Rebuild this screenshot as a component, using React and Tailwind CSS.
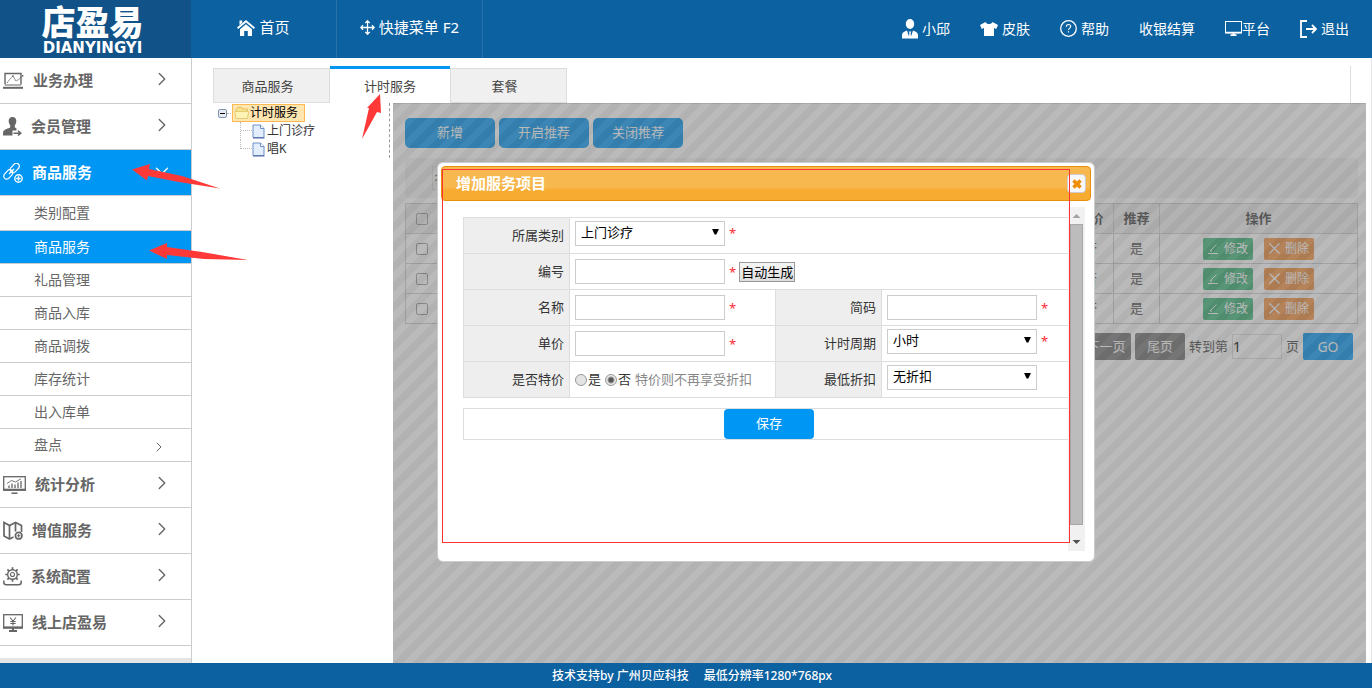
import React, { useState } from "react";
import clsx from "clsx";
import { ChevronRight, ChevronDown, X } from "lucide-react";

// sidebar icons
const LaptopIcon = () => (
  <svg width="21" height="17" viewBox="0 0 21 17" fill="none" stroke="currentColor">
    <path d="M2 12.5V1.5h16v11" strokeWidth="1.4" />
    <path d="M2 13h16" strokeWidth="1" />
    <path d="M0 15.8h20" strokeWidth="2" />
    <path d="M4 11l3-4 3-3 3 5 3.5-2 3-3.5" strokeWidth="0.9" strokeDasharray="2 0.6" />
    <path d="M9.3 3.3h1.4v1.4H9.3zM19 3h1.4v1.4H19z" fill="currentColor" stroke="none" />
  </svg>
);

const MemberIcon = () => (
  <svg width="19" height="19" viewBox="0 0 19 19" fill="currentColor">
    <path d="M9.5 0C7 0 5.500 1.700 5.700 4.200c.1 1.700.7 3 1.500 3.900v2.200C6.500 11.700 0 11.800 0 16v2.500h9.500v-5h4v-2c-1-.4-1.500-.8-1.700-1.200V8.100c.9-.9 1.400-2.200 1.500-3.900C13.500 1.700 12 0 9.500 0z" />
    <path d="M10.500 16.200h7M15 13.700l2.800 2.500-2.800 2.300" fill="none" stroke="currentColor" strokeWidth="1.500" />
  </svg>
);

const LinkIcon = () => (
  <svg width="20" height="20" viewBox="0 0 20 20" fill="none" stroke="currentColor" strokeWidth="1.200">
    <rect x="6.500" y="2" width="10.500" height="6" rx="3" transform="rotate(-48 11.700 5)" />
    <rect x="0" y="8.500" width="10.500" height="6" rx="3" transform="rotate(-48 5.200 11.500)" />
    <path d="M6 11l5-5" />
    <circle cx="15.500" cy="15.500" r="3.700" strokeWidth="1.400" />
    <path d="M15.500 13.300v4.400M13.300 15.500h4.400" strokeWidth="1.400" />
  </svg>
);

const StatsIcon = () => (
  <svg width="23" height="18" viewBox="0 0 23 18" fill="none" stroke="currentColor">
    <rect x="0.700" y="0.700" width="21.600" height="13" strokeWidth="1.300" />
    <path d="M0 13.800h23" strokeWidth="2.200" />
    <path d="M8.500 17.200h6" strokeWidth="1.500" />
    <path d="M6 12V9.500M9 12V7.500M12 12V8.500M15 12V6.500M18 12V5" strokeWidth="1.300" />
    <path d="M4 7.500l4.500-3 4 1.500L18 2.800" strokeWidth="0.900" />
  </svg>
);

const MapIcon = () => (
  <svg width="20" height="19" viewBox="0 0 20 19" fill="none" stroke="currentColor" strokeWidth="1.700">
    <path d="M10.500 16L6.500 18l-5.500-3V1.500l5.500 3 6-3 6 3v6.500" />
    <path d="M6.500 4.500V18M12.500 1.500v9" />
    <circle cx="15.700" cy="14.700" r="3.300" />
    <path d="M15.700 13v3.400M14 14.700h3.400" strokeWidth="1.100" />
  </svg>
);

const GearIcon = () => (
  <svg width="19" height="19" viewBox="0 0 19 19" fill="none" stroke="currentColor">
    <circle cx="9.500" cy="7.500" r="4.800" strokeWidth="1.400" />
    <circle cx="9.500" cy="7.500" r="2" strokeWidth="1.100" />
    <path d="M9.500 0.300v2.400M9.500 12.300v2.400M2.300 7.500h2.400M14.300 7.500h2.400M4.400 2.400l1.700 1.700M12.900 10.900l1.700 1.700M4.400 12.600l1.700-1.700M12.900 4.100l1.700-1.700" strokeWidth="1.700" />
    <path d="M0.800 13.500v1.700c0 1.500 1 2.500 2.500 2.500h12.400c1.500 0 2.500-1 2.500-2.500v-1.700" strokeWidth="1.500" />
  </svg>
);

const OnlineIcon = () => (
  <svg width="20" height="18" viewBox="0 0 20 18" fill="none" stroke="currentColor">
    <rect x="0.700" y="0.700" width="18.600" height="12.600" strokeWidth="1.300" />
    <path d="M0 13.700h20" strokeWidth="2.200" />
    <path d="M10 14v3M6 17h8" strokeWidth="2" />
    <path d="M7 3.500l3 3.500 3-3.500M10 7v4.500M7.300 7.500h5.400M7.300 9.500h5.400" strokeWidth="1.100" />
  </svg>
);

// header icons
const HomeIcon = () => (
  <svg width="18" height="16" viewBox="0 0 18 16" fill="currentColor">
    <path d="M9 0L0 7.600l1.200 1.400L9 2.500 16.800 9 18 7.600zM2.500 0.500h2.700v2.200L2.500 5z" />
    <path d="M9 4.200L3 9.200V16h4.200v-5h3.600v5H15V9.200z" />
  </svg>
);

const MoveIcon = () => (
  <svg width="15" height="15" viewBox="0 0 15 15" fill="none" stroke="currentColor" strokeWidth="1.300">
    <path d="M7.500 1v13M1 7.500h13M5.300 3l2.200-2.200L9.700 3M5.300 12l2.200 2.200L9.700 12M3 5.300L.8 7.500 3 9.700M12 5.300l2.200 2.200L12 9.700" />
  </svg>
);

const UserIcon = () => (
  <svg width="16" height="20" viewBox="0 0 16 20" fill="currentColor">
    <ellipse cx="8" cy="5" rx="4.200" ry="5" />
    <path d="M0 19.500V16c0-2.500 2.500-3.500 5-4.500l2 6 .4-3.500-.7-1.500h2.600l-.7 1.500.4 3.500 2-6c2.500 1 5 2 5 4.500v3.500z" />
  </svg>
);

const ShirtIcon = () => (
  <svg width="18" height="14" viewBox="0 0 18 14" fill="currentColor">
    <path d="M5.500 0L0 3l1.800 4L4 6v8h10V6l2.200 1L18 3l-5.500-3c-.8 1.500-2 2-3.500 2S6.300 1.500 5.500 0z" />
  </svg>
);

const HelpIcon = () => (
  <svg width="17" height="17" viewBox="0 0 17 17" fill="none" stroke="currentColor">
    <circle cx="8.500" cy="8.500" r="7.800" strokeWidth="1.300" />
    <path d="M6.300 6.700c0-1.400 1-2.200 2.200-2.200s2.200.8 2.200 2c0 1.600-2.200 1.600-2.200 3.500" strokeWidth="1.100" />
    <path d="M8.500 11.200v1.300" strokeWidth="1.200" />
  </svg>
);

const ScreenIcon = () => (
  <svg width="17" height="15" viewBox="0 0 17 15" fill="none" stroke="currentColor">
    <rect x="0.500" y="0.500" width="16" height="11.500" />
    <path d="M0.500 11.500h16" strokeWidth="1.500" />
    <path d="M8.500 12v2M5.500 14.200h6" strokeWidth="1.800" />
  </svg>
);

const ExitIcon = () => (
  <svg width="17" height="18" viewBox="0 0 17 18" fill="none" stroke="currentColor" strokeWidth="1.800">
    <path d="M7 1H1v16h6" />
    <path d="M6 9h10M12 5l4 4-4 4" />
  </svg>
);

// tree icons
const FolderIcon = () => (
  <svg width="16" height="16" viewBox="0 0 16 16">
    <path d="M2 12.500V4.500L3.500 2.500h4l1 1.500h5v8.500z" fill="#f6e08a" stroke="#e0c060" />
    <path d="M.7 6.500h14l-1.200 7H2z" fill="#fdf3b5" stroke="#e3cd74" />
  </svg>
);

const FileIcon = () => (
  <svg width="13" height="15" viewBox="0 0 13 15">
    <path d="M1 1h7.500L12 4.500V13.500H1z" fill="#e3eefc" stroke="#6f8fc9" />
    <path d="M8.500 1v3.500H12" fill="#fff" stroke="#6f8fc9" />
    <path d="M1 14h11.500" stroke="#4c65a0" />
  </svg>
);

const topMenus = [
  { text: "小邱", icon: <UserIcon /> },
  { text: "皮肤", icon: <ShirtIcon /> },
  { text: "帮助", icon: <HelpIcon /> },
  { text: "收银结算" },
  { text: "平台", icon: <ScreenIcon />, tight: true },
  { text: "退出", icon: <ExitIcon /> },
];

const subMenus = ["类别配置", "商品服务", "礼品管理", "商品入库", "商品调拨", "库存统计", "出入库单", "盘点"];

const menus = [
  { text: "业务办理", icon: <LaptopIcon /> },
  { text: "会员管理", icon: <MemberIcon /> },
  { text: "商品服务", icon: <LinkIcon />, children: subMenus },
  { text: "统计分析", icon: <StatsIcon /> },
  { text: "增值服务", icon: <MapIcon /> },
  { text: "系统配置", icon: <GearIcon /> },
  { text: "线上店盈易", icon: <OnlineIcon /> },
];

const Header = () => (
  <header className="flex h-[58px] shrink-0 bg-[#0c61a1] text-white">
    <div className="flex w-[191px] shrink-0 flex-col items-center bg-[#115288] pt-1 pr-[6px]">
      <span className="h-9 text-[34px] leading-9 font-black">店盈易</span>
      <span className="font-['DejaVu_Sans'] text-[15px] leading-4 font-bold">DIANYINGYI</span>
    </div>
    <nav className="flex text-[15px]">
      <a href="#" className="flex w-[146px] items-center justify-center gap-1 border-r border-[#2871aa] pb-[3px]">
        <HomeIcon />首页
      </a>
      <a href="#" className="flex w-[146px] items-center justify-center gap-1 border-r border-[#2871aa] pb-[3px]">
        <MoveIcon />快捷菜单 F2
      </a>
    </nav>
    <nav className="ml-auto flex items-center gap-[30px] pr-[23px] pb-px text-sm">
      {topMenus.map((m) => (
        <a key={m.text} href="#" className={clsx("flex items-center", !m.tight && "gap-1")}>
          {m.icon}
          {m.text}
        </a>
      ))}
    </nav>
  </header>
);

const Sidebar = () => {
  const [current, setCurrent] = useState("商品服务");

  return (
    <aside className="flex w-48 shrink-0 flex-col border-r border-[#ccc] text-[#666]">
      {menus.map((m) => (
        <div key={m.text}>
          <button
            className={clsx(
              "flex h-[46px] w-full items-center gap-[9px] border-b border-[#ccc] pr-[18px] pl-[3px] text-[15px] font-bold",
              m.children && "bg-[#0096f3] text-white"
            )}
          >
            {m.icon}
            {m.text}
            {m.children
              ? <ChevronDown size={22} strokeWidth={1.5} className="mb-1 ml-auto" />
              : <ChevronRight size={22} strokeWidth={1.5} className="mb-1 ml-auto" />}
          </button>
          {m.children && m.children.map((s, i) => (
            <button
              key={s}
              onClick={() => setCurrent(s)}
              className={clsx(
                "flex w-full items-center border-b border-[#ccc] pr-6 pl-[34px] text-sm",
                i === 0 ? "h-[35px]" : "h-[33px]",
                s === current && "bg-[#0096f3] text-white"
              )}
            >
              {s}
              {s === "盘点" && <ChevronRight size={16} strokeWidth={1.5} className="mt-1 ml-auto" />}
            </button>
          ))}
        </div>
      ))}
      <div className="mt-auto h-[5px] bg-[#e5e5e5]"></div>
    </aside>
  );
};

const Tree = () => (
  <div className="h-[55px] w-[177px] border-r border-dashed border-[#999] pt-px text-xs text-[#333]">
    <div className="flex h-[18px] items-center">
      <span className="flex w-[19px] items-center pl-[5px]">
        <span className="flex h-[9px] w-[9px] items-center justify-center rounded-xs border border-[#7b93ad] bg-[#e6ecf2]">
          <span className="h-px w-[5px] bg-black"></span>
        </span>
        <span className="w-1 border-t border-dotted border-[#bbb]"></span>
      </span>
      <a href="#" className="flex h-[18px] items-center border border-[#ffb951] bg-[#ffe6b0] px-px pr-[6px] text-black">
        <FolderIcon />计时服务
      </a>
    </div>
    {["上门诊疗", "唱K"].map((t, i) => (
      <div key={t} className="flex h-[18px] items-center pl-[27px]">
        <span className={clsx("flex w-3 flex-col self-start border-l border-dotted border-[#bbb]", i === 0 ? "h-full" : "h-[9px]")}>
          <span className="mt-2 border-t border-dotted border-[#bbb]"></span>
        </span>
        <a href="#" className="flex items-center gap-[2px]"><FileIcon />{t}</a>
      </div>
    ))}
  </div>
);

const ListPage = () => (
  <div className="flex h-full flex-col px-3 pr-2 pt-[14px] text-[13px] text-[#444]">
    <div className="flex gap-1 text-white">
      {["新增", "开启推荐", "关闭推荐"].map((t) => (
        <button key={t} className="h-[30px] w-[90px] rounded-[5px] bg-[#0096f3]">{t}</button>
      ))}
    </div>
    <div className="mt-[10px] flex h-10 items-center rounded-sm bg-[#f2f2f2] pl-[27px]">
      <input aria-label="名称" placeholder="名称" className="h-6 w-36 border border-[#ddd] pl-px placeholder:text-[#555]" />
    </div>
    <table className="mt-[5px] w-full table-fixed border-collapse text-center">
      <thead>
        <tr className="h-[30px] bg-[#eee]">
          <th className="w-8 border border-[#ccc]">
            <input type="checkbox" aria-label="全选" className="mx-auto block h-3 w-3 appearance-none rounded-xs border border-[#999]" />
          </th>
          <th className="border border-[#ccc]"></th>
          <th className="w-[46px] border border-[#ccc]">特价</th>
          <th className="w-[46px] border border-[#ccc]">推荐</th>
          <th className="w-[198px] border border-[#ccc]">操作</th>
        </tr>
      </thead>
      <tbody>
        {[1, 2, 3].map((id) => (
          <tr key={id} className="h-[30px]">
            <td className="border border-[#ccc]">
              <input type="checkbox" aria-label="选择" className="mx-auto block h-3 w-3 appearance-none rounded-xs border border-[#999]" />
            </td>
            <td className="border border-[#ccc]"></td>
            <td className="border border-[#ccc]">否</td>
            <td className="border border-[#ccc]">是</td>
            <td className="border border-[#ccc]">
              <div className="flex justify-center gap-[11px] text-xs text-white">
                <button className="flex h-[22px] w-[50px] items-center justify-center gap-[5px] rounded-xs bg-[#3cb478]">
                  <svg width="11" height="11" viewBox="0 0 11 11" fill="none" stroke="currentColor">
                    <path d="M0 10.500h10M2 8l6.500-6.500M2 8h2" />
                  </svg>
                  修改
                </button>
                <button className="flex h-[22px] w-[50px] items-center justify-center gap-[5px] rounded-xs bg-[#f4903e]">
                  <svg width="11" height="11" viewBox="0 0 11 11" fill="none" stroke="currentColor" strokeWidth="1.300">
                    <path d="M.5.5l10 10M10.500.5l-10 10" />
                  </svg>
                  删除
                </button>
              </div>
            </td>
          </tr>
        ))}
      </tbody>
    </table>
    <div className="mt-[9px] flex items-center justify-end gap-1 pr-[5px]">
      <button className="h-[27px] w-[50px] rounded-xs bg-[#747474] text-white">下一页</button>
      <button className="h-[27px] w-[50px] rounded-xs bg-[#747474] text-white">尾页</button>
      <label htmlFor="page">转到第</label>
      <input id="page" defaultValue="1" className="h-[25px] w-[50px] border border-[#ddd] text-sm text-black" />
      <span>页</span>
      <button className="h-[27px] w-[50px] rounded-xs bg-[#0096f3] text-sm text-white">GO</button>
    </div>
  </div>
);

const Star = () => <span className="ml-1 text-[13px] leading-4 text-red-500">*</span>;

const LabelCell = ({ id, children }) => (
  <td className="border border-[#ddd] bg-[#eee] pr-[5px] text-right">
    <label htmlFor={id}>{children}</label>
  </td>
);

const TextBox = ({ id, children }) => (
  <div className="flex items-center pl-[5px]">
    <input id={id} className="h-[25px] w-[150px] border border-[#ccc] px-1 text-black" />
    <Star />
    {children}
  </div>
);

const SelectBox = ({ id, value, required }) => (
  <div className="flex items-center pb-[5px] pl-[5px]">
    <div className="relative">
      <select id={id} className="block h-[25px] w-[150px] appearance-none border border-[#ccc] bg-white pl-[5px] text-black">
        <option>{value}</option>
      </select>
      <svg width="7" height="6" viewBox="0 0 8 7" className="pointer-events-none absolute top-2 right-[6px]">
        <path d="M0 0h8L5 6.500H3z" />
      </svg>
    </div>
    {required && <Star />}
  </div>
);

const RadioBox = ({ text, ...rest }) => (
  <label className="mr-1 flex items-center gap-px">
    <input
      type="radio"
      name="special"
      className="h-3 w-3 appearance-none rounded-full border border-[#999] bg-[#e4e4e4] checked:bg-[radial-gradient(circle,#555_0_2px,#e8e8e8_4px)]"
      {...rest}
    />
    {text}
  </label>
);

const ServiceDialog = () => (
  <div role="dialog" aria-label="增加服务项目" className="absolute top-[58px] left-11 flex h-[400px] w-[658px] flex-col rounded-md border border-[#ccc] bg-white p-[3px]">
    <div className="flex h-[35px] shrink-0 items-center justify-between rounded border border-[#e78f08] bg-linear-to-b from-[#f8b850] from-60% to-[#f7ab30] to-70% pr-1 pl-[14px]">
      <h2 className="text-[15px] font-bold text-white">增加服务项目</h2>
      <button aria-label="关闭" className="flex h-[19px] w-[19px] items-center justify-center rounded border border-[#ccc] bg-[#f8f8f8] text-[#ef8c08]">
        <X size={14} strokeWidth={6} strokeLinecap="butt" />
      </button>
    </div>
    <div className="mt-[6px] mb-[7px] flex min-h-0 flex-1 pr-[6px]">
      <form className="flex-1 overflow-hidden pt-[10px] pl-[22px] text-[13px] text-[#333]" onSubmit={(e) => e.preventDefault()}>
        <table className="w-[612px] table-fixed border-collapse">
          <colgroup>
            <col className="w-[106px]" />
            <col className="w-[206px]" />
            <col className="w-[106px]" />
            <col />
          </colgroup>
          <tbody>
            <tr className="h-9">
              <LabelCell id="category">所属类别</LabelCell>
              <td colSpan={3} className="border border-[#ddd]">
                <SelectBox id="category" value="上门诊疗" required />
              </td>
            </tr>
            <tr className="h-9">
              <LabelCell id="code">编号</LabelCell>
              <td colSpan={3} className="border border-[#ddd]">
                <TextBox id="code">
                  <button type="button" className="ml-[3px] h-5 border border-[#999] bg-linear-to-b from-[#f6f6f6] to-[#ddd] px-px leading-4 text-black">自动生成</button>
                </TextBox>
              </td>
            </tr>
            <tr className="h-9">
              <LabelCell id="name">名称</LabelCell>
              <td className="border border-[#ddd]"><TextBox id="name" /></td>
              <LabelCell id="short">简码</LabelCell>
              <td className="border border-[#ddd]"><TextBox id="short" /></td>
            </tr>
            <tr className="h-9">
              <LabelCell id="price">单价</LabelCell>
              <td className="border border-[#ddd]"><TextBox id="price" /></td>
              <LabelCell id="period">计时周期</LabelCell>
              <td className="border border-[#ddd]"><SelectBox id="period" value="小时" required /></td>
            </tr>
            <tr className="h-9">
              <LabelCell>是否特价</LabelCell>
              <td className="border border-[#ddd]">
                <div className="flex items-center pl-[5px] whitespace-nowrap">
                  <RadioBox text="是" />
                  <RadioBox text="否" defaultChecked />
                  <span className="text-[#888]">特价则不再享受折扣</span>
                </div>
              </td>
              <LabelCell id="discount">最低折扣</LabelCell>
              <td className="border border-[#ddd]"><SelectBox id="discount" value="无折扣" /></td>
            </tr>
          </tbody>
        </table>
        <div className="mt-[10px] flex w-[612px] justify-center border border-[#ddd]">
          <button type="submit" className="h-[30px] w-[90px] rounded bg-[#0096f3] text-white">保存</button>
        </div>
      </form>
      {/* scroll bar */}
      <div className="flex w-[17px] flex-col items-center bg-[#f1f1f1]">
        <svg width="17" height="17" viewBox="0 0 17 17" className="shrink-0"><path d="M4.500 11h8l-4-4z" fill="#a3a3a3" /></svg>
        <div className="h-[301px] w-[13px] border border-[#a8a8a8] bg-[#bcbcbc]"></div>
        <svg width="17" height="17" viewBox="0 0 17 17" className="mt-auto shrink-0"><path d="M4.500 6h8l-4 4z" fill="#505050" /></svg>
      </div>
    </div>
  </div>
);

// red marks drawn over the page
const Marks = () => (
  <svg width="1100" height="560" viewBox="0 0 1100 560" className="pointer-events-none absolute top-0 left-0" fill="#ff3838">
    <path d="M132 169.500L150 164l-1 5 33 7 38 12.500-44-7-28-5.500-1 4.500z" />
    <path d="M149 250.500L167 243v4l35 5 46 8-44-1-37-4v4z" />
    <path d="M380 94l1 19-4-1-15 27 7-31-2 0z" />
    <rect x="442.500" y="169.500" width="627" height="373" fill="none" stroke="#f33" />
  </svg>
);

const App = () => (
  <div className="relative flex h-screen min-h-[690px] flex-col bg-white font-['Noto_Sans','Noto_Sans_CJK_SC',sans-serif]">
    <Header />
    <div className="flex min-h-0 flex-1">
      <Sidebar />
      <main className="flex min-w-0 flex-1 flex-col border-r border-[#e5e5e5] pt-2 pr-[5px] pl-[21px] text-[13px] text-[#444]">
        <div className="mr-[15px] flex h-[37px] items-end border-r border-[#ddd]">
          <button className="h-[35px] w-[117px] border border-[#ddd] bg-[#f0f0f0] pt-[2px] pr-2">商品服务</button>
          <button className="h-[37px] w-[120px] border-t-3 border-[#0096f3] bg-white pt-px">计时服务</button>
          <button className="h-[35px] w-[117px] border border-[#ddd] bg-[#f0f0f0] pt-[2px] pr-2">套餐</button>
        </div>
        <div className="flex min-h-0 flex-1">
          <div className="w-[180px] shrink-0"><Tree /></div>
          <section className="relative min-w-0 flex-1 border-t border-[#ddd]">
            <ListPage />
            <div className="absolute inset-x-0 -top-px bottom-0 bg-[linear-gradient(135deg,#656565_25%,#757575_25%_50%,#656565_50%_75%,#757575_75%)] bg-size-[20px_20px] opacity-50"></div>
            <ServiceDialog />
          </section>
        </div>
      </main>
    </div>
    <footer className="mb-[2px] flex h-[25px] shrink-0 items-center justify-center gap-[15px] bg-[#0c61a1] pl-3 text-xs font-medium text-white">
      <span>技术支持by 广州贝应科技</span>
      <span>最低分辨率1280*768px</span>
    </footer>
    <Marks />
  </div>
);

export default App;
